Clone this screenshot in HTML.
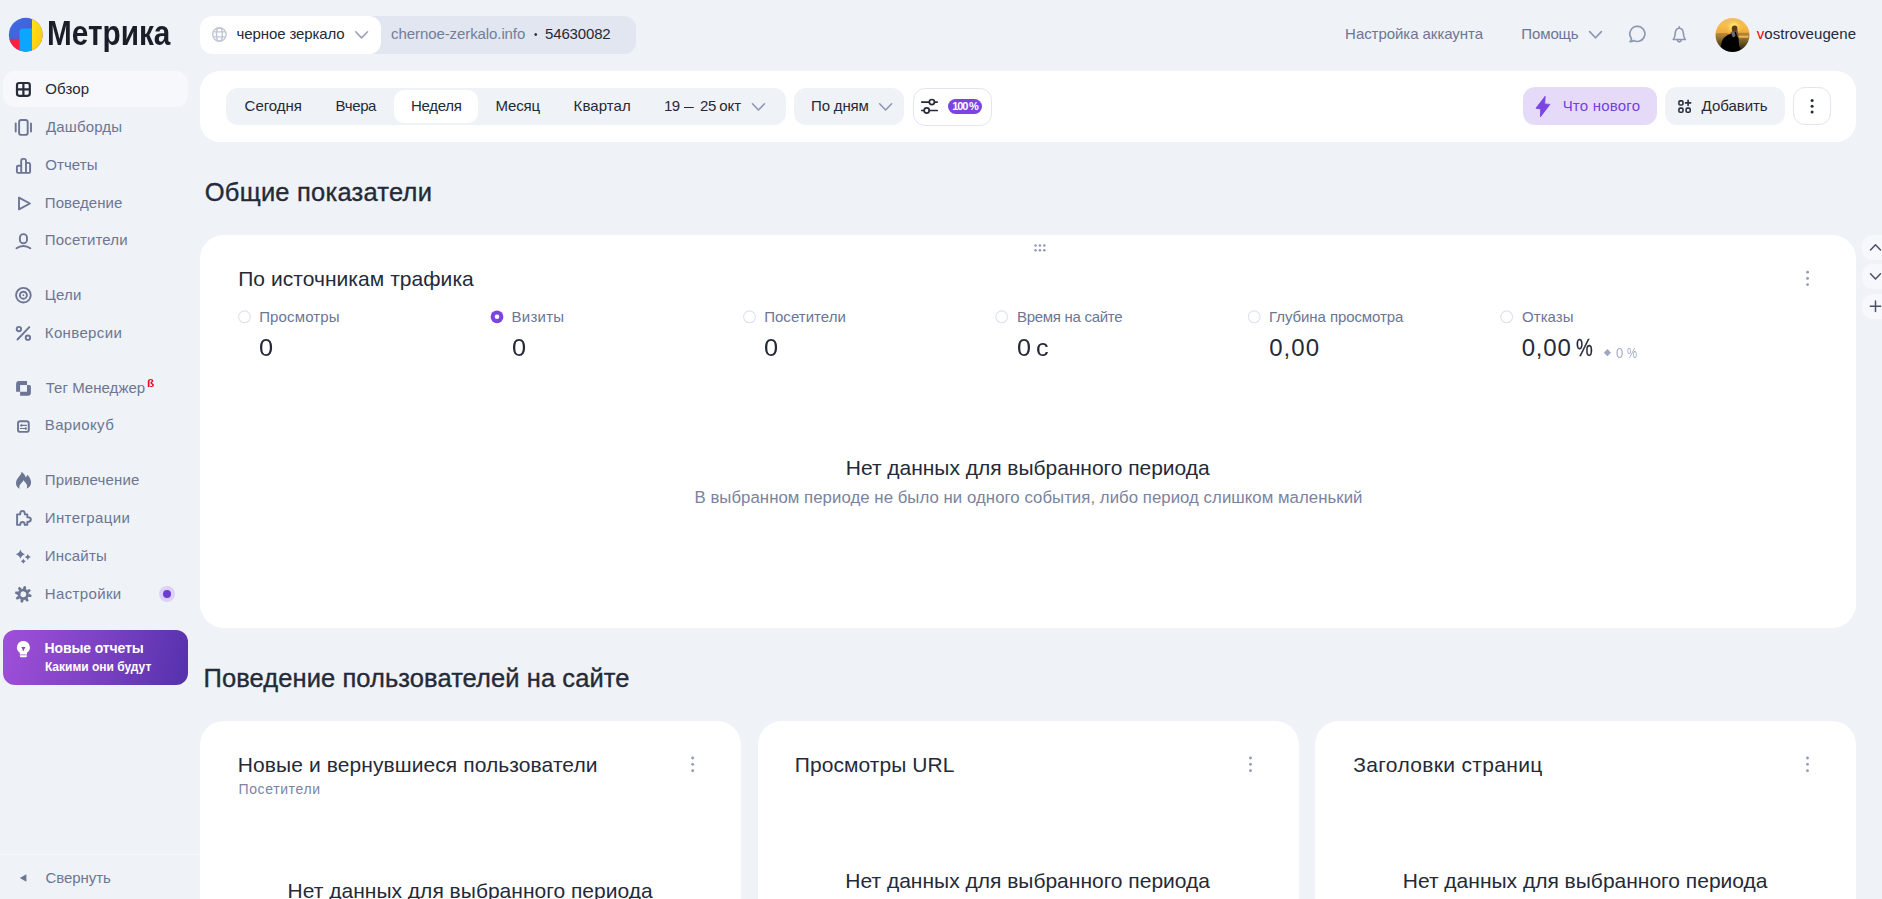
<!DOCTYPE html>
<html lang="ru">
<head>
<meta charset="utf-8">
<title>Метрика — Обзор</title>
<style>
*{box-sizing:border-box;margin:0;padding:0}
html,body{width:1882px;height:899px;overflow:hidden}
body{background:#eff2f7;font-family:"Liberation Sans",sans-serif;color:#252a38;position:relative}
.a{position:absolute}
.t{position:absolute;white-space:nowrap;line-height:1;transform-origin:0 0}
.card{position:absolute;background:#fff;border-radius:24px}
.pill{position:absolute;background:#eff2f7;border-radius:12px}
#icons{position:absolute;left:0;top:0;width:1882px;height:899px;pointer-events:none}
.ni{fill:none;stroke:#6c7694;stroke-width:1.9;stroke-linecap:round;stroke-linejoin:round}
.nf{fill:#6c7694;stroke:none}
.hi{fill:none;stroke:#8c96b3;stroke-width:1.6;stroke-linecap:round;stroke-linejoin:round}
.di{fill:none;stroke:#272c3b;stroke-width:1.7;stroke-linecap:round;stroke-linejoin:round}
.kb{fill:#8f98b5}
</style>
</head>
<body>

<!-- ===== header shapes ===== -->
<div id="header">
  <div class="pill" style="left:200px;top:16px;width:436px;height:38px;background:#e1e6f0"></div>
  <div class="pill" style="left:200px;top:16px;width:181px;height:38px;background:#fff"></div>
</div>

<!-- ===== sidebar shapes ===== -->
<div id="sidebar">
  <div class="pill" style="left:3px;top:71px;width:185px;height:36px;background:#f6f8fc"></div>
  <div class="a" style="left:3px;top:630px;width:185px;height:55px;border-radius:12px;background:linear-gradient(105deg,#a04fd9 0%,#8044c6 45%,#5531ac 100%)"></div>
  <div class="a" style="left:0;top:854px;width:200px;height:1px;background:#f4f6fa"></div>
  <div class="a" style="left:159px;top:586px;width:16px;height:16px;border-radius:50%;background:#dcd1f6"></div>
  <div class="a" style="left:163px;top:590px;width:8px;height:8px;border-radius:50%;background:#6d3bd6"></div>
</div>

<!-- ===== toolbar shapes ===== -->
<div id="toolbar">
  <div class="card" style="left:200px;top:71px;width:1656px;height:71px;border-radius:20px"></div>
  <div class="pill" style="left:226px;top:88px;width:560px;height:37px"></div>
  <div class="a" style="left:394px;top:90px;width:84px;height:33px;background:#fff;border-radius:10px"></div>
  <div class="pill" style="left:794px;top:88px;width:110px;height:37px"></div>
  <div class="a" style="left:913px;top:88px;width:79px;height:38px;background:#fff;border:1px solid #e3e6f0;border-radius:12px"></div>
  <div class="a" style="left:948px;top:99px;width:34px;height:15px;background:#7a45e0;border-radius:8px"></div>
  <div class="a" style="left:1523px;top:87px;width:134px;height:38px;background:#e5dbf9;border-radius:12px"></div>
  <div class="pill" style="left:1665px;top:87px;width:120px;height:38px"></div>
  <div class="a" style="left:1793px;top:87px;width:38px;height:38px;background:#fff;border:1px solid #e3e6f0;border-radius:12px"></div>
</div>

<!-- ===== main cards ===== -->
<div id="main">
  <div class="card" style="left:200px;top:235px;width:1656px;height:393px"></div>
  <div class="card" style="left:200px;top:721px;width:541px;height:220px"></div>
  <div class="card" style="left:758px;top:721px;width:541px;height:220px"></div>
  <div class="card" style="left:1315px;top:721px;width:541px;height:220px"></div>
  <div class="a" style="left:1862px;top:235px;width:40px;height:25px;background:#f6f8fc;border-radius:10px"></div>
  <div class="a" style="left:1862px;top:264px;width:40px;height:25px;background:#f6f8fc;border-radius:10px"></div>
  <div class="a" style="left:1862px;top:294px;width:40px;height:25px;background:#f6f8fc;border-radius:10px"></div>
</div>
<svg id="icons" width="1882" height="899" viewBox="0 0 1882 899">
  <defs>
    <clipPath id="lc"><circle cx="25.75" cy="34.75" r="16.9"/></clipPath>
    <linearGradient id="ly" x1="0" y1="0" x2="1" y2="1"><stop offset="0" stop-color="#ffe41c"/><stop offset="1" stop-color="#ffc107"/></linearGradient>
    <linearGradient id="lb" x1="0" y1="0" x2="1" y2="1"><stop offset="0" stop-color="#3c70ea"/><stop offset="1" stop-color="#4a4fc4"/></linearGradient>
    <clipPath id="av"><circle cx="1732.5" cy="35" r="17"/></clipPath>
    <linearGradient id="sky" x1="0" y1="0" x2="0" y2="1"><stop offset="0" stop-color="#efbd62"/><stop offset="0.25" stop-color="#f6bd4c"/><stop offset="0.44" stop-color="#f1a83a"/><stop offset="0.52" stop-color="#a47c34"/><stop offset="0.72" stop-color="#5e4a1e"/><stop offset="0.9" stop-color="#1c160a"/><stop offset="1" stop-color="#0a0804"/></linearGradient>
    <filter id="soft" x="-10%" y="-10%" width="120%" height="120%"><feGaussianBlur stdDeviation="0.55"/></filter>
    <radialGradient id="sun" cx="0.5" cy="0.5" r="0.5"><stop offset="0" stop-color="#fff3a0"/><stop offset="0.45" stop-color="#ffdc62" stop-opacity="0.85"/><stop offset="1" stop-color="#f6b848" stop-opacity="0"/></radialGradient>
  </defs>

  <!-- logo -->
  <g clip-path="url(#lc)">
    <rect x="8" y="17" width="36" height="36" fill="url(#lb)"/>
    <rect x="8" y="38.9" width="12" height="14" fill="#ff1f45"/>
    <path d="M19.5 53V31.6a3.2 3.2 0 0 1 3.2-3.2H32V53z" fill="#0aa6ff"/>
    <rect x="32" y="17" width="12" height="36" fill="url(#ly)"/>
  </g>

  <!-- globe -->
  <g fill="none" stroke="#c1c6d6" stroke-width="1.400">
    <circle cx="219.4" cy="34.4" r="6.7"/>
    <ellipse cx="219.400" cy="34.400" rx="2.900" ry="6.700"/>
    <path d="M213.400 31.900h12M213.400 36.900h12"/>
  </g>
  <!-- chevrons in header -->
  <path class="hi" style="stroke:#9aa2ba" d="M355.7 31.8l5.9 6.1 5.9-6.1"/>
  <path class="hi" d="M1589.6 31.6l5.9 6.2 5.9-6.2"/>
  <!-- chat -->
  <path class="hi" d="M1637.4 26.2a7.6 7.6 0 1 1-3.7 14.3c-1 .7-2.300 1.100-3.700 1.200 .9-.9 1.400-2 1.500-3.200a7.600 7.600 0 0 1 5.900-12.300z"/>
  <!-- bell -->
  <path class="hi" d="M1673.200 39.500c1.600-1.500 1.900-3.500 2-6 .2-3.300 1.800-5.300 4.100-5.300s3.900 2 4.100 5.300c.100 2.500 .4 4.500 2 6z"/>
  <path class="hi" d="M1677.300 39.900c.3 1.300 1.100 2 2 2s1.700-.7 2-2M1679.300 26.700v1.300"/>

  <!-- avatar -->
  <g clip-path="url(#av)">
    <g filter="url(#soft)">
    <rect x="1713" y="16" width="39" height="39" fill="url(#sky)"/>
    <circle cx="1733.800" cy="27" r="8.500" fill="url(#sun)"/>
    <rect x="1716" y="33.200" width="12" height="2.400" fill="#9c7a3c" opacity="0.700"/>
    <rect x="1738" y="32.800" width="11" height="2" fill="#a07a3a" opacity="0.800"/>
    <rect x="1738.500" y="35.800" width="10" height="1.900" fill="#f3c356" opacity="0.900"/>
    <path d="M1720.500 54c-.2-7 .8-13 3.300-16 1.800-2 4.200-3.200 6.700-4.300l1.500-2.200h4.500l1 3.500c1.300 3 1.600 6.500 1.500 10.500l2 4 3 1.500-1 3.500z" fill="#060606"/>
    <ellipse cx="1734.600" cy="28.800" rx="2.900" ry="3.300" fill="#5b3a16"/>
    <path d="M1730.500 32l2.500 5.500 2.500-1.500-1-4.500z" fill="#6d6a68"/>
    <path d="M1735.600 30.500l1.800 6.500 1.200-1-1-5.500z" fill="#7e5234"/>
    </g>
  </g>
  <!-- sidebar icons -->
  <!-- grid (active) -->
  <g fill="none" stroke="#272c3b" stroke-width="2.200">
    <rect x="17" y="83" width="12.800" height="12.800" rx="2.200"/>
    <path d="M23.400 83v12.800M17 89.400h12.800"/>
  </g>
  <!-- dashboards -->
  <rect class="ni" x="19.100" y="120" width="8.600" height="14.900" rx="2.200"/>
  <path class="ni" style="stroke-width:1.900" d="M15.700 123.500v8M31 123.500v8"/>
  <!-- reports -->
  <path class="ni" d="M16.900 171.700v-4.700a1.300 1.300 0 0 1 1.300-1.300h3v-5a1.800 1.800 0 0 1 1.800-1.800h1.200a1.800 1.800 0 0 1 1.800 1.800v2.200h2.600a1.500 1.500 0 0 1 1.500 1.500v7.300a1.200 1.200 0 0 1-1.200 1.200h-10.800a1.200 1.200 0 0 1-1.200-1.200zM21.200 165.700v6M26 162.900v8.800"/>
  <!-- play -->
  <path class="ni" d="M19 197.600v11.800l10.900-5.900z"/>
  <!-- user -->
  <rect class="ni" x="19.900" y="234.100" width="7.100" height="9.200" rx="3.550"/>
  <path class="ni" d="M16.500 248.300c1.900-1.500 4.300-2.300 6.900-2.300s5 .8 6.900 2.300"/>
  <!-- goals -->
  <circle class="ni" cx="23.400" cy="295.200" r="7.300"/>
  <circle class="ni" cx="23.400" cy="295.200" r="3.500"/>
  <circle class="nf" cx="23.400" cy="295.200" r="0.900"/>
  <!-- percent -->
  <circle class="ni" cx="18.900" cy="329.100" r="2.200"/>
  <circle class="ni" cx="27.900" cy="337.700" r="2.200"/>
  <path class="ni" d="M17.500 339.500l11.800-12.400"/>
  <!-- tag manager -->
  <path class="nf" fill-rule="evenodd" d="M19 381.100h8v3.900h2.400a1.500 1.500 0 0 1 1.500 1.500v6.200a3 3 0 0 1-3 3h-7.800v-4h-4v-7.700a2.900 2.900 0 0 1 2.900-2.900zM20.100 385v6.700h6.900v-6.700z"/>
  <!-- variocube -->
  <rect class="ni" x="18" y="421.200" width="10.800" height="10.700" rx="2.200"/>
  <path class="ni" style="stroke-width:1.200" d="M21.500 425.400h5.200M20.300 428.500h5.200"/>
  <circle class="nf" cx="21.300" cy="425.400" r="1.200"/><circle class="nf" cx="25.800" cy="428.500" r="1.200"/>
  <!-- flame -->
  <path class="nf" d="M21.600 471.800c-.3 4-5.600 6.400-5.600 11.400 0 2.800 1.600 4.800 3.900 5.600-.6-.8-.7-2-.3-3.200.7-2.100 3-3 3.800-5.400 1.200 1.400 3.800 3.600 3.800 6.100 0 1-.3 1.800-.9 2.500 2.800-.8 4.800-3.200 4.800-6.200 0-3-1.500-5.600-3.700-7.900-.3 1.100-.9 1.900-1.700 2.500-.8-2.200-2.100-4-4.100-5.400z"/>
  <!-- puzzle -->
  <path class="ni" d="M17.100 514.400h3c0-2.300 .8-3.500 2.400-3.500s2.400 1.200 2.400 3.500h2.400v2.800c2.300 0 3.600 .8 3.600 2.400s-1.300 2.400-3.600 2.400v2.900h-2.500c0-1.900-.8-2.900-2.300-2.900s-2.300 1-2.300 2.900h-3.100z"/>
  <!-- sparkles -->
  <path class="nf" d="M20.400 549.600Q21.400 553.200 25 554.200Q21.400 555.200 20.400 558.800Q19.400 555.200 15.800 554.200Q19.400 553.200 20.400 549.600ZM27.800 553.900Q28.500 556.300 30.900 557Q28.500 557.700 27.800 560.100Q27.100 557.700 24.700 557Q27.100 556.300 27.800 553.900ZM23.300 558.700Q23.850 560.650 25.800 561.200Q23.850 561.750 23.300 563.700Q22.750 561.750 20.800 561.200Q22.750 560.650 23.300 558.700Z" stroke="#6c7694" stroke-width="0.700" stroke-linejoin="round"/>
  <!-- gear -->
  <g transform="translate(23.300 594.300) rotate(12)">
    <circle cx="0" cy="0" r="4.250" fill="none" stroke="#6c7694" stroke-width="2.700"/>
    <g fill="#6c7694">
      <path d="M-1.700 -5.200L-1.050 -8.300H1.050L1.700 -5.200Z"/>
      <path transform="rotate(45)" d="M-1.700 -5.200L-1.050 -8.300H1.050L1.700 -5.200Z"/>
      <path transform="rotate(90)" d="M-1.700 -5.200L-1.050 -8.300H1.050L1.700 -5.200Z"/>
      <path transform="rotate(135)" d="M-1.700 -5.200L-1.050 -8.300H1.050L1.700 -5.200Z"/>
      <path transform="rotate(180)" d="M-1.700 -5.200L-1.050 -8.300H1.050L1.700 -5.200Z"/>
      <path transform="rotate(225)" d="M-1.700 -5.200L-1.050 -8.300H1.050L1.700 -5.200Z"/>
      <path transform="rotate(270)" d="M-1.700 -5.200L-1.050 -8.300H1.050L1.700 -5.200Z"/>
      <path transform="rotate(315)" d="M-1.700 -5.200L-1.050 -8.300H1.050L1.700 -5.200Z"/>
    </g>
  </g>
  <!-- bulb -->
  <path fill="#fff" d="M23.400 641.100a6.400 6.400 0 0 1 3.600 11.700v1.600h-7.200v-1.600a6.400 6.400 0 0 1 3.600-11.700zM19.900 655.300h7v.9a1 1 0 0 1-1 1h-5a1 1 0 0 1-1-1z"/>
  <path fill="#8a45cc" d="M21.300 647h4.200l-1.400 2.400v1.300h-1.400v-1.300z"/>
  <!-- collapse triangle -->
  <path class="nf" d="M26.400 874.200v7.600l-6.600-3.800z"/>
  <!-- toolbar chevrons -->
  <path class="hi" style="stroke:#8c96b3" d="M752.500 103.800l6 6.200 6-6.200"/>
  <path class="hi" style="stroke:#8c96b3" d="M879.600 103.800l6 6.200 6-6.200"/>
  <!-- sliders -->
  <path class="di" d="M921.800 102.100h7.500M934.500 102.100h2.700M921.800 110.500h2.300M929.300 110.500h7.900"/>
  <circle class="di" cx="931.900" cy="102.100" r="2.600"/>
  <circle class="di" cx="926.700" cy="110.500" r="2.600"/>
  <!-- bolt -->
  <path d="M1545.200 96.200l-.5 7.700 5.200 .5-9.500 12.500 .2-8-4.700-.6z" fill="#7a45e0" stroke="#7a45e0" stroke-width="0.800" stroke-linejoin="round"/>
  <!-- add widgets -->
  <g fill="none" stroke="#2b3040" stroke-width="1.600" stroke-linecap="round">
    <rect x="1678.900" y="100.900" width="4.100" height="4.100" rx="1.300"/>
    <rect x="1678.900" y="108.100" width="4.100" height="4.100" rx="1.300"/>
    <rect x="1686.100" y="108.100" width="4.100" height="4.100" rx="1.300"/>
    <path d="M1688.100 100.300v5.200M1685.500 102.900h5.200"/>
  </g>
  <!-- toolbar kebab -->
  <g fill="#272c3b"><circle cx="1812.100" cy="100.600" r="1.500"/><circle cx="1812.100" cy="106.300" r="1.500"/><circle cx="1812.100" cy="112.100" r="1.500"/></g>

  <!-- drag handle -->
  <g fill="#8f98b5">
    <circle cx="1035.500" cy="245.600" r="1.250"/><circle cx="1039.900" cy="245.600" r="1.250"/><circle cx="1044.300" cy="245.600" r="1.250"/>
    <circle cx="1035.500" cy="250.200" r="1.250"/><circle cx="1039.900" cy="250.200" r="1.250"/><circle cx="1044.300" cy="250.200" r="1.250"/>
  </g>
  <!-- card kebabs -->
  <g class="kb">
    <circle cx="1807.600" cy="272.200" r="1.400"/><circle cx="1807.600" cy="278.400" r="1.400"/><circle cx="1807.600" cy="284.600" r="1.400"/>
    <circle cx="692.700" cy="758" r="1.400"/><circle cx="692.700" cy="764.300" r="1.400"/><circle cx="692.700" cy="770.700" r="1.400"/>
    <circle cx="1250.500" cy="758" r="1.400"/><circle cx="1250.500" cy="764.300" r="1.400"/><circle cx="1250.500" cy="770.700" r="1.400"/>
    <circle cx="1807.500" cy="758" r="1.400"/><circle cx="1807.500" cy="764.300" r="1.400"/><circle cx="1807.500" cy="770.700" r="1.400"/>
  </g>
  <!-- side buttons -->
  <g fill="none" stroke="#4a5166" stroke-width="1.500" stroke-linecap="round" stroke-linejoin="round">
    <path d="M1870.500 250l5-5.200 5 5.200"/>
    <path d="M1870.500 273.700l5 5.200 5-5.200"/>
    <path d="M1870.300 306.300h10.400M1875.500 301.100v10.400"/>
  </g>
  <!-- radios -->
  <g fill="#fff" stroke="#dfe3ee" stroke-width="1.200">
    <circle cx="244.500" cy="316.800" r="5.900"/>
    <circle cx="749.500" cy="316.800" r="5.900"/>
    <circle cx="1001.700" cy="316.800" r="5.900"/>
    <circle cx="1254.200" cy="316.800" r="5.900"/>
    <circle cx="1506.700" cy="316.800" r="5.900"/>
  </g>
  <circle cx="497" cy="316.800" r="6.400" fill="#7a45e0"/>
  <circle cx="497" cy="316.800" r="2.300" fill="#fff"/>
  <!-- delta diamond -->
  <path d="M1607.400 349.100l3.600 3.600-3.600 3.600-3.600-3.600z" fill="#9ea6c1"/>
</svg>
<!-- ===== texts ===== -->
<div id="texts">
<div class="t" style="left:47.23px;top:16.00px;font-size:34.2px;font-weight:700;color:#1a1e29;transform:scaleX(0.8702);">Метрика</div>
<div class="t" style="left:236.60px;top:26.00px;font-size:15px;font-weight:400;color:#252a38;letter-spacing:-0.108px;">черное зеркало</div>
<div class="t" style="left:391.11px;top:26.00px;font-size:15px;font-weight:400;color:#737d98;letter-spacing:-0.091px;">chernoe-zerkalo.info</div>
<div class="t" style="left:534.05px;top:29.00px;font-size:11px;font-weight:400;color:#252a38;transform:scaleX(0.9054);">•</div>
<div class="t" style="left:545.00px;top:26.00px;font-size:15px;font-weight:400;color:#252a38;letter-spacing:-0.146px;">54630082</div>
<div class="t" style="left:1345.11px;top:26.00px;font-size:15px;font-weight:400;color:#6c7694;letter-spacing:-0.054px;">Настройка аккаунта</div>
<div class="t" style="left:1521.33px;top:26.00px;font-size:15px;font-weight:400;color:#6c7694;letter-spacing:-0.121px;">Помощь</div>
<div class="t" style="left:1756.69px;top:26.00px;font-size:15px;font-weight:400;color:#252a38;letter-spacing:0.075px;"><span style="color:#f00">v</span>ostroveugene</div>
<div class="t" style="left:244.60px;top:98.00px;font-size:15px;font-weight:400;color:#252a38;letter-spacing:-0.025px;">Сегодня</div>
<div class="t" style="left:335.61px;top:98.00px;font-size:15px;font-weight:400;color:#252a38;letter-spacing:-0.378px;">Вчера</div>
<div class="t" style="left:410.91px;top:98.00px;font-size:15px;font-weight:400;color:#252a38;letter-spacing:-0.253px;">Неделя</div>
<div class="t" style="left:495.51px;top:98.00px;font-size:15px;font-weight:400;color:#252a38;letter-spacing:-0.178px;">Месяц</div>
<div class="t" style="left:573.61px;top:98.00px;font-size:15px;font-weight:400;color:#252a38;letter-spacing:0.066px;">Квартал</div>
<div class="t" style="left:664.10px;top:98.00px;font-size:15px;font-weight:400;color:#252a38;letter-spacing:-0.600px;">19</div>
<div class="t" style="left:684.00px;top:98.00px;font-size:15px;font-weight:400;color:#252a38;transform:scaleX(0.6533);">—</div>
<div class="t" style="left:699.93px;top:98.00px;font-size:15px;font-weight:400;color:#252a38;letter-spacing:-0.331px;">25</div>
<div class="t" style="left:719.14px;top:98.00px;font-size:15px;font-weight:400;color:#252a38;letter-spacing:0.047px;">окт</div>
<div class="t" style="left:811.03px;top:98.00px;font-size:15px;font-weight:400;color:#252a38;letter-spacing:-0.155px;">По дням</div>
<div class="t" style="left:952.20px;top:101.00px;font-size:11px;font-weight:700;color:#fff;letter-spacing:-1.124px;">100 %</div>
<div class="t" style="left:1562.67px;top:98.00px;font-size:15px;font-weight:400;color:#7340dc;letter-spacing:0.208px;">Что нового</div>
<div class="t" style="left:1701.60px;top:98.00px;font-size:15px;font-weight:400;color:#252a38;letter-spacing:-0.030px;">Добавить</div>
<div class="t" style="left:204.80px;top:180.00px;font-size:25.5px;font-weight:400;-webkit-text-stroke:0.35px currentColor;color:#252a38;letter-spacing:0.226px;">Общие показатели</div>
<div class="t" style="left:238.17px;top:268.00px;font-size:21px;font-weight:400;color:#252a38;letter-spacing:0.049px;">По источникам трафика</div>
<div class="t" style="left:259.13px;top:309.00px;font-size:15px;font-weight:400;color:#6c7694;letter-spacing:0.155px;">Просмотры</div>
<div class="t" style="left:511.61px;top:309.00px;font-size:15px;font-weight:400;color:#6c7694;letter-spacing:0.251px;">Визиты</div>
<div class="t" style="left:764.13px;top:309.00px;font-size:15px;font-weight:400;color:#6c7694;letter-spacing:0.044px;">Посетители</div>
<div class="t" style="left:1017.01px;top:309.00px;font-size:15px;font-weight:400;color:#6c7694;letter-spacing:-0.294px;">Время на сайте</div>
<div class="t" style="left:1269.11px;top:309.00px;font-size:15px;font-weight:400;color:#6c7694;letter-spacing:-0.087px;">Глубина просмотра</div>
<div class="t" style="left:1522.05px;top:309.00px;font-size:15px;font-weight:400;color:#6c7694;letter-spacing:0.044px;">Отказы</div>
<div class="t" style="left:259.14px;top:336.00px;font-size:24px;font-weight:400;color:#252a38;transform:scaleX(1.0579);">0</div>
<div class="t" style="left:511.64px;top:336.00px;font-size:24px;font-weight:400;color:#252a38;transform:scaleX(1.0579);">0</div>
<div class="t" style="left:764.14px;top:336.00px;font-size:24px;font-weight:400;color:#252a38;transform:scaleX(1.0579);">0</div>
<div class="t" style="left:1017.05px;top:336.00px;font-size:24px;font-weight:400;color:#252a38;transform:scaleX(1.0493);">0</div>
<div class="t" style="left:1036.25px;top:336.00px;font-size:24px;font-weight:400;color:#252a38;transform:scaleX(1.0477);">с</div>
<div class="t" style="left:1269.20px;top:336.00px;font-size:24px;font-weight:400;color:#252a38;letter-spacing:1.031px;">0,00</div>
<div class="t" style="left:1521.70px;top:336.00px;font-size:24px;font-weight:400;color:#252a38;letter-spacing:0.831px;">0,00</div>
<div class="t" style="left:1575.82px;top:336.00px;font-size:24px;font-weight:400;-webkit-text-stroke:0.3px currentColor;color:#252a38;transform:scaleX(0.7858);">%</div>
<div class="t" style="left:1616.46px;top:346.00px;font-size:14.5px;font-weight:400;color:#a4acc6;transform:scaleX(0.9011);">0</div>
<div class="t" style="left:1627.11px;top:346.00px;font-size:14.5px;font-weight:400;color:#a4acc6;transform:scaleX(0.7864);">%</div>
<div class="t" style="left:845.87px;top:457.00px;font-size:21px;font-weight:400;color:#252a38;letter-spacing:-0.029px;">Нет данных для выбранного периода</div>
<div class="t" style="left:694.46px;top:490.00px;font-size:16.8px;font-weight:400;color:#7a839f;letter-spacing:0.041px;">В выбранном периоде не было ни одного события, либо период слишком маленький</div>
<div class="t" style="left:203.60px;top:666.00px;font-size:25.5px;font-weight:400;-webkit-text-stroke:0.35px currentColor;color:#252a38;letter-spacing:0.079px;">Поведение пользователей на сайте</div>
<div class="t" style="left:237.87px;top:754.00px;font-size:21px;font-weight:400;color:#252a38;letter-spacing:0.085px;">Новые и вернувшиеся пользователи</div>
<div class="t" style="left:238.50px;top:782.00px;font-size:14px;font-weight:400;color:#7a839f;letter-spacing:0.620px;">Посетители</div>
<div class="t" style="left:287.57px;top:880.00px;font-size:21px;font-weight:400;color:#252a38;letter-spacing:0.012px;">Нет данных для выбранного периода</div>
<div class="t" style="left:794.77px;top:754.00px;font-size:21px;font-weight:400;color:#252a38;letter-spacing:0.066px;">Просмотры URL</div>
<div class="t" style="left:845.37px;top:870.00px;font-size:21px;font-weight:400;color:#252a38;letter-spacing:-0.004px;">Нет данных для выбранного периода</div>
<div class="t" style="left:1353.30px;top:754.00px;font-size:21px;font-weight:400;color:#252a38;letter-spacing:0.337px;">Заголовки страниц</div>
<div class="t" style="left:1402.77px;top:870.00px;font-size:21px;font-weight:400;color:#252a38;letter-spacing:-0.001px;">Нет данных для выбранного периода</div>
<div class="t" style="left:45.25px;top:81.00px;font-size:15px;font-weight:400;color:#252a38;letter-spacing:0.155px;">Обзор</div>
<div class="t" style="left:45.90px;top:119.00px;font-size:15px;font-weight:400;color:#6c7694;letter-spacing:0.157px;">Дашборды</div>
<div class="t" style="left:45.25px;top:157.00px;font-size:15px;font-weight:400;color:#6c7694;letter-spacing:0.073px;">Отчеты</div>
<div class="t" style="left:44.83px;top:195.00px;font-size:15px;font-weight:400;color:#6c7694;letter-spacing:0.056px;">Поведение</div>
<div class="t" style="left:44.83px;top:232.00px;font-size:15px;font-weight:400;color:#6c7694;letter-spacing:0.155px;">Посетители</div>
<div class="t" style="left:44.81px;top:287.00px;font-size:15px;font-weight:400;color:#6c7694;letter-spacing:0.155px;">Цели</div>
<div class="t" style="left:44.81px;top:325.00px;font-size:15px;font-weight:400;color:#6c7694;letter-spacing:0.358px;">Конверсии</div>
<div class="t" style="left:45.70px;top:380.00px;font-size:15px;font-weight:400;color:#6c7694;letter-spacing:0.041px;">Тег Менеджер</div>
<div class="t" style="left:147.36px;top:378.00px;font-size:11px;font-weight:700;color:#e00a1a;transform:scaleX(1.0711);">ß</div>
<div class="t" style="left:44.81px;top:417.00px;font-size:15px;font-weight:400;color:#6c7694;letter-spacing:0.361px;">Вариокуб</div>
<div class="t" style="left:44.83px;top:472.00px;font-size:15px;font-weight:400;color:#6c7694;letter-spacing:0.159px;">Привлечение</div>
<div class="t" style="left:44.81px;top:510.00px;font-size:15px;font-weight:400;color:#6c7694;letter-spacing:0.381px;">Интеграции</div>
<div class="t" style="left:44.81px;top:548.00px;font-size:15px;font-weight:400;color:#6c7694;letter-spacing:0.165px;">Инсайты</div>
<div class="t" style="left:44.81px;top:586.00px;font-size:15px;font-weight:400;color:#6c7694;letter-spacing:0.353px;">Настройки</div>
<div class="t" style="left:44.60px;top:641.00px;font-size:14px;font-weight:700;color:#fff;letter-spacing:-0.123px;">Новые отчеты</div>
<div class="t" style="left:44.90px;top:661.00px;font-size:12px;font-weight:700;color:#fff;letter-spacing:-0.007px;">Какими они будут</div>
<div class="t" style="left:45.40px;top:870.00px;font-size:15px;font-weight:400;color:#6c7694;letter-spacing:-0.054px;">Свернуть</div>
</div>
</body>
</html>
